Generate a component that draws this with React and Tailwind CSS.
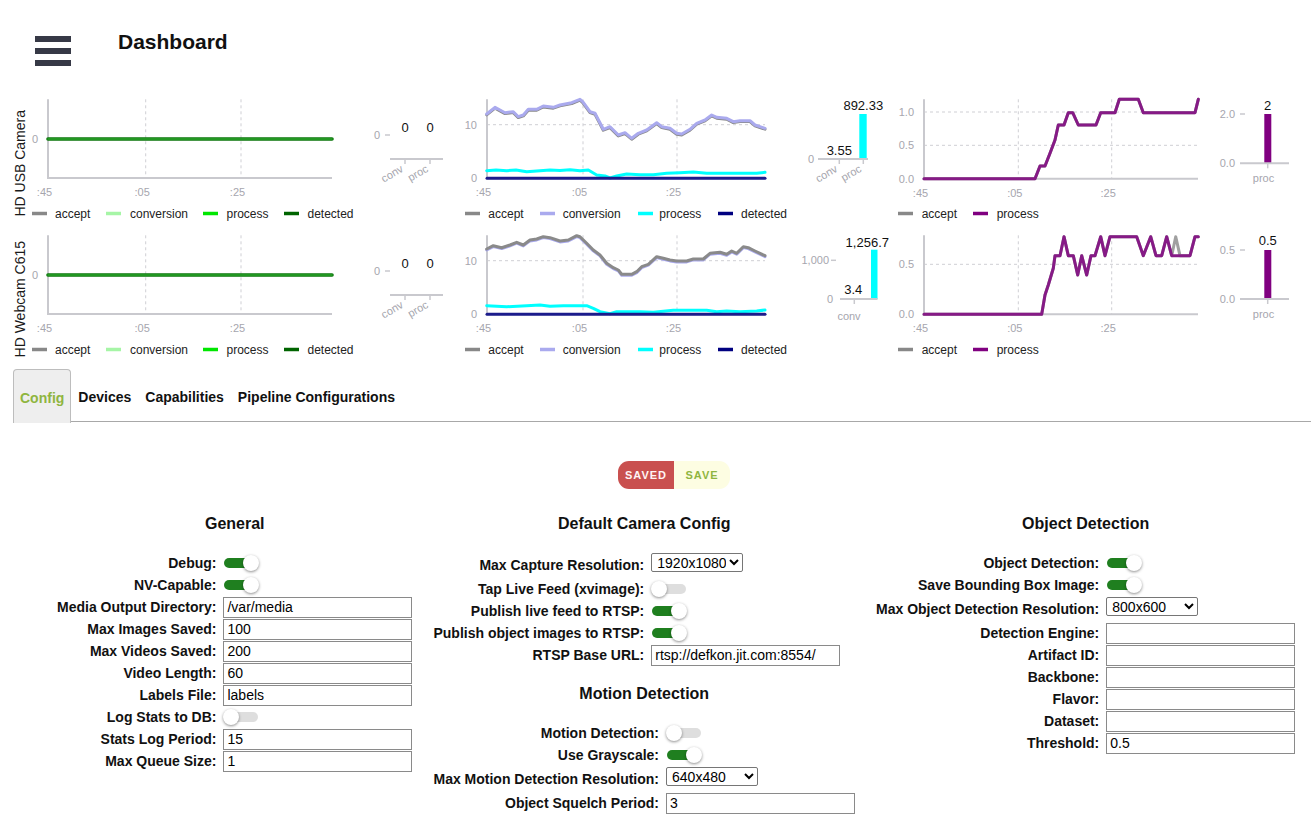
import { useState } from 'react'

const AXIS = '#c9c9ce'
const GRID = '#cfcfd4'
const TICK = '#a6a6ae'

const toPoints = (list) => list.map((p) => p.join(',')).join(' ')
const shiftY = (list, dy) => list.map(([x, y]) => [x, y + dy])

// ---- chart data (x in page pixels, y in row pixels) ----

const g2ConvRow1 = [
  [486.7, 22], [495, 15.3], [505, 20.7], [513.3, 19.7], [518.3, 24.7], [523.3, 23], [528.3, 17.3],
  [536.7, 17.3], [543.3, 14], [553.3, 15.3], [560, 13], [571.7, 10.7], [580, 7.3], [582.7, 9.7],
  [590, 19.7], [595, 21.3], [603.3, 37.3], [610, 34.7], [618.3, 43], [625, 40.7], [631.7, 46.3],
  [638.3, 41.3], [646.7, 38], [656.7, 30.7], [661.7, 34.7], [670, 36.3], [676.7, 41.3], [681.7, 42],
  [690, 37.3], [696.7, 31.3], [705, 28], [711.7, 23], [716.7, 25.3], [726.7, 26.3], [733.3, 29.7],
  [740, 28.7], [750, 28.7], [755, 33], [765, 36.3],
]

const g2ProcRow1 = [
  [486.7, 78.7], [496, 78], [506.7, 78.7], [516, 78], [526.7, 79.7], [540, 78.7], [550, 78],
  [560, 78.4], [570, 77.8], [580, 78.7], [588.3, 78], [596.7, 83], [605, 84], [610, 86],
  [616.7, 84], [626.7, 82], [640, 82.7], [653.3, 82.7], [666.7, 81.3], [680, 80.7], [693.3, 80],
  [706.7, 81.3], [723.3, 81.3], [740, 81.3], [756.7, 81.3], [765, 80.3],
]

const g2AcceptRow2 = [
  [486.7, 21], [493.3, 17.7], [501.7, 19.7], [510, 17], [516.7, 14.3], [523.3, 17], [530, 12],
  [536.7, 11], [543.3, 8.7], [550, 9.7], [560, 13], [568.3, 12], [576.7, 7.7], [580, 8.7],
  [586.7, 15.3], [593.3, 22], [600, 27], [606.7, 35.3], [613.3, 39.7], [618.3, 42], [621.7, 46.3],
  [631.7, 46.3], [636.7, 43.7], [641.7, 38.7], [648.3, 36.3], [656.7, 28.7], [663.3, 30.3],
  [670, 32], [676.7, 33], [686.7, 33], [693.3, 31], [703.3, 31], [710, 25.3], [720, 24.3],
  [726.7, 26.3], [731.7, 23], [736.7, 25.3], [743.3, 18.7], [748.3, 19.7], [755, 23], [765, 27.7],
]

const g2ProcRow2 = [
  [486.7, 77.7], [506.7, 78.7], [526.7, 77.7], [540, 77], [550, 78.3], [563.3, 77.7], [586.7, 77.7],
  [593.3, 80.3], [600, 83.7], [610, 85.7], [616.7, 83.7], [640, 83.7], [653.3, 84.3], [673.3, 82.3],
  [706.7, 82.3], [716.7, 83.7], [726.7, 83], [740, 83.7], [756.7, 83], [765, 82],
]

const g3ProcRow1 = [
  [924, 86.7], [1035, 86.7], [1040, 74], [1045, 74], [1050, 61.3], [1055, 48], [1058.3, 33],
  [1064, 33], [1068.3, 20.7], [1072.7, 20.7], [1078.3, 33], [1096, 33], [1100.7, 20.7],
  [1115, 20.7], [1119.3, 7.3], [1138.3, 7.3], [1143.3, 20.7], [1195, 20.7], [1198.3, 7.3],
]

const g3ProcRow2 = [
  [924, 86.3], [1041.7, 86.3], [1045, 67], [1048.3, 57], [1053.3, 40.3], [1055, 27.7], [1060, 27.7],
  [1064, 8.7], [1068.3, 27.7], [1073.3, 27.7], [1077.7, 47], [1081.7, 27.7], [1086.7, 47],
  [1091, 27.7], [1095, 27.7], [1100.7, 8.7], [1105, 27.7], [1110, 8.7], [1136.7, 8.7],
  [1143.3, 27.7], [1150.7, 8.7], [1156, 27.7], [1161.7, 27.7], [1166.7, 8.7], [1171.7, 27.7],
  [1190, 27.7], [1195, 8.7], [1198.3, 8.7],
]

const g3AcceptRow2 = [
  ...g3ProcRow2.slice(0, 25),
  [1175.7, 8.7], [1180, 27.7], [1190, 27.7], [1195, 8.7], [1198.3, 8.7],
]

const LEGENDS = {
  g1: [
    { label: 'accept', color: '#888888', seg: 32, text: 55 },
    { label: 'conversion', color: '#a6f5a6', seg: 106, text: 130 },
    { label: 'process', color: '#00e600', seg: 203, text: 226.5 },
    { label: 'detected', color: '#006400', seg: 284, text: 307.5 },
  ],
  g2: [
    { label: 'accept', color: '#888888', seg: 465, text: 488.3 },
    { label: 'conversion', color: '#aaaaee', seg: 540, text: 562.7 },
    { label: 'process', color: '#00ffff', seg: 638, text: 659.3 },
    { label: 'detected', color: '#000080', seg: 718, text: 741 },
  ],
  g3: [
    { label: 'accept', color: '#888888', seg: 898, text: 921.7 },
    { label: 'process', color: '#800080', seg: 973, text: 996.7 },
  ],
}

const flat = (x1, x2, y) => [[x1, y], [x2, y]]

const g1Line = {
  x1: 48, x2: 332, top: 7.3, axisY: 86,
  gridX: [145.7, 241], gridY: [],
  yLabels: [{ y: 47, t: '0' }],
  lines: [
    { color: '#0b760b', width: 3.6, pts: flat(48, 332, 47) },
    { color: '#2aa32a', width: 1.4, pts: flat(48, 332, 47) },
  ],
}

const g2Axes = {
  x1: 487, x2: 765, top: 7.3, axisY: 86.3,
  gridX: [583, 677], gridY: [32.7],
  yLabels: [{ y: 32.7, t: '10' }, { y: 86.3, t: '0' }],
}

const g3Axes = { x1: 924, x2: 1198, top: 7.3, gridX: [1018.3, 1111.7] }

const g1Bar = {
  ticks: [{ y: 43, t: '0', tx: 380, dash: [385, 390] }],
  axis: { x1: 390, x2: 443, y: 67 },
  rotate: true,
  cats: [
    { x: 405, label: 'conv', value: '0', vy: 40 },
    { x: 430, label: 'proc', value: '0', vy: 40 },
  ],
}

const ROWS = [
  {
    name: 'HD USB Camera',
    groups: [
      { x0: 28, width: 427, legend: LEGENDS.g1, line: g1Line, bar: g1Bar },
      {
        x0: 455, width: 438, legend: LEGENDS.g2,
        line: {
          ...g2Axes,
          lines: [
            { color: '#8a8a8a', width: 3, pts: shiftY(g2ConvRow1, 0.9) },
            { color: '#aaaaee', width: 3, pts: g2ConvRow1 },
            { color: '#00ffff', width: 3, pts: g2ProcRow1 },
            { color: '#1c1c8c', width: 3, pts: flat(487, 765, 86.3) },
          ],
        },
        bar: {
          ticks: [{ y: 67, t: '0', tx: 814 }],
          axis: { x1: 818, x2: 868, y: 67 },
          rotate: true,
          color: '#00ffff',
          cats: [
            { x: 839.3, label: 'conv', value: '3.55', vy: 62.6 },
            { x: 863.3, label: 'proc', value: '892.33', vy: 17.6, bar: { x: 859.3, w: 7.4, top: 22 } },
          ],
        },
      },
      {
        x0: 893, width: 418, legend: LEGENDS.g3,
        line: {
          ...g3Axes, axisY: 86.7, gridY: [20, 53.3],
          yLabels: [{ y: 20, t: '1.0' }, { y: 53.3, t: '0.5' }, { y: 86.7, t: '0.0' }],
          lines: [
            { color: '#9a9a9a', width: 3, pts: g3ProcRow1 },
            { color: '#861a86', width: 3, pts: g3ProcRow1 },
          ],
        },
        bar: {
          ticks: [{ y: 22, t: '2.0', tx: 1235, dash: [1240, 1245] }, { y: 71.3, t: '0.0', tx: 1235 }],
          axis: { x1: 1240, x2: 1289, y: 71.3 },
          color: '#800080',
          cats: [
            { x: 1267.7, label: 'proc', lx: 1263.5, ly: 90, value: '2', vy: 17.6, bar: { x: 1264.3, w: 7, top: 22 } },
          ],
        },
      },
    ],
  },
  {
    name: 'HD Webcam C615',
    groups: [
      { x0: 28, width: 427, legend: LEGENDS.g1, line: g1Line, bar: g1Bar },
      {
        x0: 455, width: 438, legend: LEGENDS.g2,
        line: {
          ...g2Axes,
          lines: [
            { color: '#aaaaee', width: 3, pts: shiftY(g2AcceptRow2, 0.9) },
            { color: '#8a8a8a', width: 3, pts: g2AcceptRow2 },
            { color: '#00ffff', width: 3, pts: g2ProcRow2 },
            { color: '#1c1c8c', width: 3, pts: flat(487, 765, 86.3) },
          ],
        },
        bar: {
          ticks: [{ y: 32.3, t: '1,000', tx: 829, dash: [831, 836] }, { y: 71, t: '0', tx: 833 }],
          axis: { x1: 840, x2: 877.5, y: 71 },
          color: '#00ffff',
          cats: [
            { x: 854.3, label: 'conv', lx: 849, ly: 91.5, value: '3.4', vx: 853.3, vy: 66.3 },
            { x: 874.2, noTick: true, label: '', value: '1,256.7', vx: 867.3, vy: 18.6, bar: { x: 871, w: 6.5, top: 21.7 } },
          ],
        },
      },
      {
        x0: 893, width: 418, legend: LEGENDS.g3,
        line: {
          ...g3Axes, axisY: 86.3, gridY: [36.3],
          yLabels: [{ y: 36.3, t: '0.5' }, { y: 86.3, t: '0.0' }],
          lines: [
            { color: '#a0a0a0', width: 3, pts: g3AcceptRow2 },
            { color: '#861a86', width: 3, pts: g3ProcRow2 },
          ],
        },
        bar: {
          ticks: [{ y: 22, t: '0.5', tx: 1235, dash: [1240, 1245] }, { y: 71, t: '0.0', tx: 1235 }],
          axis: { x1: 1240, x2: 1289, y: 71 },
          color: '#800080',
          cats: [
            { x: 1267.7, label: 'proc', lx: 1263.5, ly: 90, value: '0.5', vy: 16.6, bar: { x: 1264.3, w: 7, top: 22 } },
          ],
        },
      },
    ],
  },
]

function ChartGroup({ x0, width, line, bar, legend }) {
  const xTicks = [line.x1, ...line.gridX]
  return (
    <svg width={width} height={136} viewBox={`${x0} 0 ${width} 136`} className="block shrink-0">
      {line.gridX.map((x) => (
        <line key={`gx${x}`} x1={x} x2={x} y1={line.top} y2={line.axisY} stroke={GRID} strokeDasharray="3 3" />
      ))}
      {line.gridY.map((y) => (
        <line key={`gy${y}`} x1={line.x1} x2={line.x2} y1={y} y2={y} stroke={GRID} strokeDasharray="3 3" />
      ))}
      <line x1={line.x1} x2={line.x1} y1={line.top} y2={line.axisY + 1} stroke={AXIS} strokeWidth="2" />
      <line x1={line.x1} x2={line.x2} y1={line.axisY} y2={line.axisY} stroke={AXIS} strokeWidth="2" />
      {line.yLabels.map((l) => (
        <text key={l.t} x={line.x1 - 10} y={l.y + 4} textAnchor="end" fontSize="11" fill={TICK}>{l.t}</text>
      ))}
      {xTicks.map((x, i) => (
        <text key={`xl${x}`} x={x - 3.5} y={line.axisY + 18} textAnchor="middle" fontSize="11" fill={TICK}>
          {[':45', ':05', ':25'][i]}
        </text>
      ))}
      {line.lines.map((l, i) => (
        <polyline
          key={i}
          points={toPoints(l.pts)}
          fill="none"
          stroke={l.color}
          strokeWidth={l.width}
          strokeLinejoin="round"
          strokeLinecap="round"
        />
      ))}

      {bar.ticks.map((t) => (
        <g key={t.t}>
          <text x={t.tx} y={t.y + 4} textAnchor="end" fontSize="11" fill={TICK}>{t.t}</text>
          {t.dash ? <line x1={t.dash[0]} x2={t.dash[1]} y1={t.y} y2={t.y} stroke={AXIS} strokeWidth="1.5" /> : null}
        </g>
      ))}
      {bar.cats.map((c) =>
        c.bar ? (
          <rect key={`b${c.x}`} x={c.bar.x} y={c.bar.top} width={c.bar.w} height={bar.axis.y - c.bar.top} fill={bar.color} />
        ) : null,
      )}
      <line x1={bar.axis.x1} x2={bar.axis.x2} y1={bar.axis.y} y2={bar.axis.y} stroke={AXIS} strokeWidth="2" />
      {bar.cats.map((c) => (
        <g key={`c${c.x}`}>
          {c.noTick ? null : (
            <line x1={c.x} x2={c.x} y1={bar.axis.y} y2={bar.axis.y + 5} stroke={AXIS} strokeWidth="1.5" />
          )}
          <text x={c.vx ?? c.x} y={c.vy} textAnchor="middle" fontSize="13" fill="#111">{c.value}</text>
          {c.label && bar.rotate ? (
            <text
              x={c.x - 1}
              y={bar.axis.y + 12}
              textAnchor="end"
              fontSize="11"
              fill={TICK}
              transform={`rotate(-30 ${c.x - 1} ${bar.axis.y + 12})`}
            >
              {c.label}
            </text>
          ) : null}
          {c.label && !bar.rotate ? (
            <text x={c.lx} y={c.ly} textAnchor="middle" fontSize="11" fill={TICK}>{c.label}</text>
          ) : null}
        </g>
      ))}

      {legend.map((l) => (
        <g key={l.label}>
          <line x1={l.seg} x2={l.seg + 15} y1={121.5} y2={121.5} stroke={l.color} strokeWidth="3.5" />
          <text x={l.text} y={125.8} fontSize="12" fill="#222">{l.label}</text>
        </g>
      ))}
    </svg>
  )
}

function ChartRow({ name, groups }) {
  return (
    <div className="flex h-[136px]">
      <div className="flex w-[28px] shrink-0 items-center justify-end pt-[6px]">
        <span className="rotate-180 whitespace-nowrap text-[14px] leading-[16px] text-[#1a1a1a] [writing-mode:vertical-rl]">
          {name}
        </span>
      </div>
      {groups.map((g) => (
        <ChartGroup key={g.x0} {...g} />
      ))}
    </div>
  )
}

function Toggle({ on }) {
  return (
    <span className="relative block h-[16px] w-[36px]">
      <span
        className={`absolute left-[1px] right-[1px] top-[3px] h-[10px] rounded-full ${on ? 'bg-[#1f7f1f]' : 'bg-[#dedede]'}`}
      />
      <span
        className={`absolute top-0 h-[16px] w-[16px] rounded-full bg-white shadow-[0_1px_3px_rgba(0,0,0,0.45)] ${on ? 'right-0' : 'left-0'}`}
      />
    </span>
  )
}

function TextInput({ value = '' }) {
  return (
    <input
      defaultValue={value}
      className="h-[21px] w-[189px] border border-[#8a8a8a] bg-white pl-[3px] text-[14px] text-black outline-none"
    />
  )
}

function Select({ value, options }) {
  return (
    <select
      defaultValue={value}
      className="h-[19px] w-[92px] rounded-[2px] border border-[#767676] bg-white pl-[1px] text-[14px] leading-[17px] text-black"
    >
      {options.map((o) => (
        <option key={o}>{o}</option>
      ))}
    </select>
  )
}

function Field({ label, tall, children }) {
  return (
    <>
      <div className={`whitespace-nowrap text-right font-bold ${tall ? 'h-[26px] leading-[26px]' : 'h-[22px] leading-[22px]'}`}>
        {label}
      </div>
      <div className={`flex ${tall ? 'h-[26px] items-start pt-[1px]' : 'h-[22px] items-center'}`}>{children}</div>
    </>
  )
}

function Form({ children }) {
  return (
    <div className="grid grid-cols-[max-content_max-content] gap-x-[7px] self-start text-[14px] text-[#111]">
      {children}
    </div>
  )
}

function Heading({ children, className = '' }) {
  return <h2 className={`h-[20px] text-center text-[16px] font-bold leading-[20px] text-[#111] ${className}`}>{children}</h2>
}

const RESOLUTIONS = ['640x480', '800x600', '1280x720', '1920x1080']

export default function App() {
  const [tab, setTab] = useState('Config')
  const tabs = ['Config', 'Devices', 'Capabilities', 'Pipeline Configurations']

  return (
    <div className="min-h-[827px] bg-white font-['Liberation_Sans',Arial,sans-serif] text-[#111]">
      <header className="flex h-[92px] items-start">
        <div className="ml-[35px] mt-[36px] flex flex-col gap-[6px]">
          <span className="block h-[6px] w-[36px] bg-[#363946]" />
          <span className="block h-[6px] w-[36px] bg-[#363946]" />
          <span className="block h-[6px] w-[36px] bg-[#363946]" />
        </div>
        <h1 className="ml-[47px] mt-[30px] text-[21px] font-bold leading-[24px] text-[#111]">Dashboard</h1>
      </header>

      {ROWS.map((r) => (
        <ChartRow key={r.name} {...r} />
      ))}

      <nav className="ml-[13px] mt-[5px] flex h-[53px] border-b border-[#a8a8a8]">
        {tabs.map((t) =>
          t === tab ? (
            <button
              key={t}
              onClick={() => setTab(t)}
              className="-mb-px h-[54px] rounded-t-[4px] border border-b-0 border-[#bdbdbd] bg-[#eeeeee] px-[6px] pt-[3px] text-[14px] font-bold text-[#8fb53f]"
            >
              {t}
            </button>
          ) : (
            <button key={t} onClick={() => setTab(t)} className="h-[53px] px-[7px] pt-[4px] text-[14px] font-bold text-[#111]">
              {t}
            </button>
          ),
        )}
      </nav>

      <div className="ml-[618px] mt-[39px] flex h-[28px]">
        <button className="w-[56px] rounded-l-[11px] bg-[#c9504f] text-[11px] font-bold tracking-[1px] text-[#fff4f4]">
          SAVED
        </button>
        <button className="w-[56px] rounded-r-[11px] bg-[#fdfde2] text-[11px] font-bold tracking-[1px] text-[#8fb53f]">
          SAVE
        </button>
      </div>

      <div className="mt-[25px] flex items-start gap-[21px] pl-[57px]">
        <section className="flex flex-col">
          <Heading className="mb-[18px]">General</Heading>
          <Form>
            <Field label="Debug:"><Toggle on /></Field>
            <Field label="NV-Capable:"><Toggle on /></Field>
            <Field label="Media Output Directory:"><TextInput value="/var/media" /></Field>
            <Field label="Max Images Saved:"><TextInput value="100" /></Field>
            <Field label="Max Videos Saved:"><TextInput value="200" /></Field>
            <Field label="Video Length:"><TextInput value="60" /></Field>
            <Field label="Labels File:"><TextInput value="labels" /></Field>
            <Field label="Log Stats to DB:"><Toggle /></Field>
            <Field label="Stats Log Period:"><TextInput value="15" /></Field>
            <Field label="Max Queue Size:"><TextInput value="1" /></Field>
          </Form>
        </section>

        <section className="flex flex-col">
          <Heading className="mb-[18px]">Default Camera Config</Heading>
          <Form>
            <Field label="Max Capture Resolution:" tall>
              <Select value="1920x1080" options={RESOLUTIONS} />
            </Field>
            <Field label="Tap Live Feed (xvimage):"><Toggle /></Field>
            <Field label="Publish live feed to RTSP:"><Toggle on /></Field>
            <Field label="Publish object images to RTSP:"><Toggle on /></Field>
            <Field label="RTSP Base URL:"><TextInput value="rtsp://defkon.jit.com:8554/" /></Field>
          </Form>
          <Heading className="mb-[18px] mt-[18px]">Motion Detection</Heading>
          <Form>
            <Field label="Motion Detection:"><Toggle /></Field>
            <Field label="Use Grayscale:"><Toggle on /></Field>
            <Field label="Max Motion Detection Resolution:" tall>
              <Select value="640x480" options={RESOLUTIONS} />
            </Field>
            <Field label="Object Squelch Period:"><TextInput value="3" /></Field>
          </Form>
        </section>

        <section className="flex flex-col">
          <Heading className="mb-[18px]">Object Detection</Heading>
          <Form>
            <Field label="Object Detection:"><Toggle on /></Field>
            <Field label="Save Bounding Box Image:"><Toggle on /></Field>
            <Field label="Max Object Detection Resolution:" tall>
              <Select value="800x600" options={RESOLUTIONS} />
            </Field>
            <Field label="Detection Engine:"><TextInput /></Field>
            <Field label="Artifact ID:"><TextInput /></Field>
            <Field label="Backbone:"><TextInput /></Field>
            <Field label="Flavor:"><TextInput /></Field>
            <Field label="Dataset:"><TextInput /></Field>
            <Field label="Threshold:"><TextInput value="0.5" /></Field>
          </Form>
        </section>
      </div>
    </div>
  )
}
